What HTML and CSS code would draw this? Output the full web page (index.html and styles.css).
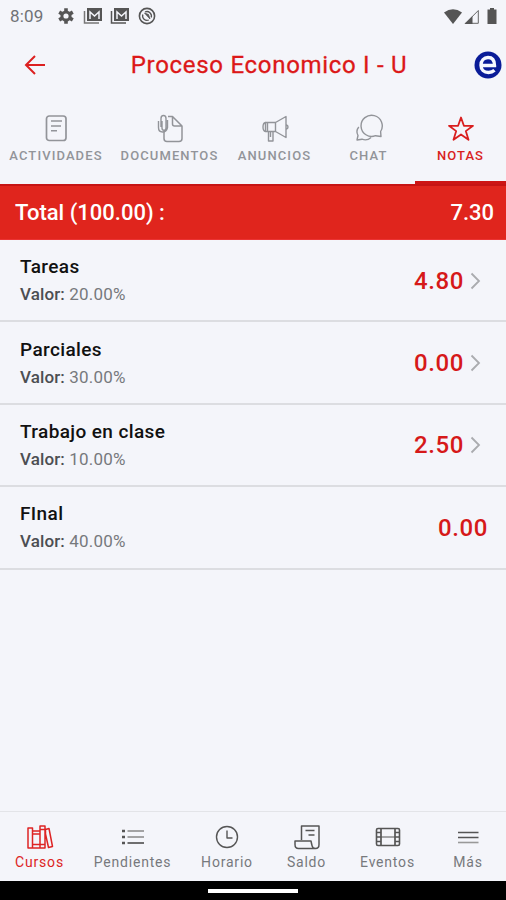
FILE: index.html
```html
<!DOCTYPE html>
<html lang="es">
<head>
<meta charset="utf-8">
<title>Proceso Economico I - U</title>
<link rel="stylesheet" href="styles.css">
</head>
<body>
<div class="app">
  <div class="status">
    <span class="time">8:09</span>
    <div class="notifications">
      <svg width="18" height="18" viewBox="0 0 18 18"><g stroke="#555" stroke-width="3.6"><path d="M9 1.200v15.600M2.200 5.100l13.600 7.800M15.800 5.100l-13.600 7.800"/></g><circle cx="9" cy="9" r="4.100" fill="#f4f5fa" stroke="#555" stroke-width="3"/></svg>
      <svg width="20" height="18" viewBox="0 0 20 18" fill="none"><path d="M1.500 4v12H16" stroke="#777" stroke-width="1.500"/><path d="M4 1h15v13H4z" fill="#555"/><path d="M7 12V5l4.500 4L16 5v7" stroke="#f4f5fa" stroke-width="1.500"/></svg>
      <svg width="20" height="18" viewBox="0 0 20 18" fill="none"><path d="M1.500 4v12H16" stroke="#555" stroke-width="1.500"/><path d="M4 1h15v13H4z" fill="#555"/><path d="M7 12V5l4.500 4L16 5v7" stroke="#f4f5fa" stroke-width="1.500"/></svg>
      <svg width="18" height="18" viewBox="0 0 18 18" fill="none" stroke="#555"><circle cx="9" cy="9" r="7.600" stroke-width="1.600"/><path d="M4.800 7.500a4.500 4.500 0 0 0 6 5.500M7 5a4.500 4.500 0 0 1 6.200 5.500" stroke-width="1.300"/><path d="M6.500 6l5.500 6-1.500-4.500z" fill="#555" stroke-width=".8"/></svg>
    </div>
    <div class="signals">
      <svg width="18" height="15" viewBox="0 0 18 15"><path d="M0 3.500Q9-3 18 3.500L9 15z" fill="#555"/></svg>
      <svg width="15" height="15" viewBox="0 0 15 15"><path d="M1.500 14.300H14.300V1.500z" fill="none" stroke="#666"/><path d="M.5 15L8.500 7v8z" fill="#555"/></svg>
      <svg width="10" height="16" viewBox="0 0 10 16"><path d="M3 0h4v1.500h2.500V16H.5V1.500H3z" fill="#555"/></svg>
    </div>
  </div>
  <header class="header">
    <svg class="back" width="22" height="20" viewBox="0 0 22 20"><path d="M21 10H2M11 1L2 10l9 9" fill="none" stroke="#dc2020" stroke-width="2"/></svg>
    <h1>Proceso Economico I - U</h1>
    <svg class="brand" width="28" height="28" viewBox="0 0 28 28"><circle cx="14" cy="14" r="13.500" fill="#0a1c98"/><path d="M7 14.500H20.500C20.500 9 18 6.500 14 6.500S7 9.500 7 14.200 10 21.500 14.500 21.500c2.500 0 4.300-.7 6-2.200" fill="none" stroke="#f6f8ff" stroke-width="3.400"/></svg>
  </header>
  <nav class="tabs">
    <a class="tab"><svg width="30" height="30" viewBox="0 0 30 30"><rect x="5.500" y="2" width="19.500" height="24.500" rx="2.800" stroke-width="1.700"/><path d="M10 7h11M10 12h10M10 16.800h6" stroke-width="1.500"/></svg><span>ACTIVIDADES</span></a>
    <a class="tab"><svg width="30" height="30" viewBox="0 0 30 30"><path d="M9 17.500V24.500q0 3 3 3H24q3 0 3-3V12L17.500 2.500H13M17.500 3v7q0 2 2 2H27" stroke-width="1.500"/><path d="M6 13V4.500Q6 1.500 8.500 1.500T11 4.500V14q0 2.200-2 2.200T7 14V7M3.500 7v6.500q0 4.500 4 4.500t5-4.500V6" stroke-width="1.400"/></svg><span>DOCUMENTOS</span></a>
    <a class="tab"><svg width="30" height="30" viewBox="0 0 30 30"><path d="M15.500 8.500L26 2.500v21L15.500 17.500zM15.500 8.500H5.500v9H15.500M8.500 17.500v9.500H13v-9.500M5.500 8.500Q3 9 3 13t2.500 4.500M26.500 11q1.500.5 1.500 2T26.500 15M7.500 8.500v9M10.500 18v5" stroke-width="1.400"/></svg><span>ANUNCIOS</span></a>
    <a class="tab"><svg width="30" height="30" viewBox="0 0 30 30"><path d="M27 22.500l-5.500-.8A10.600 10.600 0 1 1 26.600 17.500z" stroke-width="1.400"/><path d="M4.800 13Q1.500 17 4 21.500L3 26l5-.8q5 2 9-1.700" stroke-width="1.400"/></svg><span>CHAT</span></a>
    <a class="tab active"><svg width="30" height="30" viewBox="0 0 30 30"><path d="M15 3.500l2.900 8.300h9.100l-7.200 5.300 2.700 8.700-7.500-5.300-7.500 5.300 2.700-8.700L3 11.800h9.100z" stroke-width="1.800"/></svg><span>NOTAS</span></a>
  </nav>
  <section class="total"><span>Total (100.00) :</span><span class="total-score">7.30</span></section>
  <main class="grades">
    <div class="row"><div><h2>Tareas</h2><p><b>Valor:</b> 20.00%</p></div><strong>4.80</strong><svg class="chevron" width="11" height="18" viewBox="0 0 11 18"><path d="M1.500 1.500L9 9l-7.500 7.500"/></svg></div>
    <div class="row"><div><h2>Parciales</h2><p><b>Valor:</b> 30.00%</p></div><strong>0.00</strong><svg class="chevron" width="11" height="18" viewBox="0 0 11 18"><path d="M1.500 1.500L9 9l-7.500 7.500"/></svg></div>
    <div class="row"><div><h2>Trabajo en clase</h2><p><b>Valor:</b> 10.00%</p></div><strong>2.50</strong><svg class="chevron" width="11" height="18" viewBox="0 0 11 18"><path d="M1.500 1.500L9 9l-7.500 7.500"/></svg></div>
    <div class="row last"><div><h2>FInal</h2><p><b>Valor:</b> 40.00%</p></div><strong>0.00</strong></div>
  </main>
  <nav class="bottom">
    <a class="item active"><svg width="28" height="28" viewBox="0 0 28 28"><path d="M2 5h4.500v20H2zM6.500 8H14v17H6.500zM14 3h5v22h-5zM19.500 6.500L23 5.500l3.500 18-4 1L19.500 11zM6.500 11H14M6.500 21.500H14M14 6.500h5M14 21.500h5" stroke-width="1.500"/></svg><span>Cursos</span></a>
    <a class="item"><svg width="28" height="28" viewBox="0 0 28 28"><path d="M3 8h3M3 14h3M3 20h3" stroke-width="2.600"/><path d="M8.500 8H25M8.500 14H25" stroke="#888" stroke-width="1.700"/><path d="M8.500 20H25" stroke-width="1.700"/></svg><span>Pendientes</span></a>
    <a class="item"><svg width="28" height="28" viewBox="0 0 28 28"><circle cx="14" cy="14" r="10.500" stroke-width="1.400"/><path d="M14 7.500V15h5.500" stroke-width="1.400"/></svg><span>Horario</span></a>
    <a class="item"><svg width="28" height="28" viewBox="0 0 28 28"><path d="M8.500 17V3H26v18.500q0 4-3.500 4-3 0-3.500-3-.5-2-1-4.500H2v3.500q0 4 3.500 4h17" stroke-width="1.500"/><path d="M12.500 7.500h9M15.500 12h6" stroke-width="1.300"/></svg><span>Saldo</span></a>
    <a class="item"><svg width="28" height="28" viewBox="0 0 28 28"><rect x="2.500" y="5.500" width="23" height="17" rx="1.500" stroke-width="1.600"/><path d="M7 5.500v17M21 5.500v17M2.500 9.500H7M2.500 14H7M2.500 18.500H7M21 9.500h4.500M21 14h4.500M21 18.500h4.500" stroke-width="1.700"/><path d="M7 14h14" stroke-width="1"/></svg><span>Eventos</span></a>
    <a class="item"><svg width="28" height="28" viewBox="0 0 28 28"><path d="M4 9.500h20.500M4 14.500h20.500" stroke-width="1.300"/><path d="M4 19.500h20.500" stroke="#999" stroke-width="1.600"/></svg><span>Más</span></a>
  </nav>
  <footer class="system"><i></i></footer>
</div>
</body>
</html>
```

FILE: styles.css
```css
* { box-sizing: border-box; }
body { margin: 0; background: #f4f5fa; font-family: Roboto, sans-serif; }
h1, h2, p { margin: 0; }
svg { display: block; flex: none; }
.app { width: 506px; height: 900px; display: flex; flex-direction: column; overflow: hidden; }
.status { height: 32px; display: flex; align-items: center; padding: 0 8px 0 10px; }
.time { width: 47px; font-size: 17px; color: #707276; letter-spacing: .2px; }
.notifications { display: flex; align-items: center; gap: 7.500px; }
.signals { margin-left: auto; display: flex; align-items: center; gap: 3px; }
.signals svg:first-child { margin-right: -1px; }
.signals svg:last-child { margin-left: 5px; margin-right: 1px; }
.header { height: 66px; display: flex; align-items: center; padding: 0 4px 0 24px; }
.header h1 { flex: 1; text-align: center; font-size: 24px; line-height: 30px; font-weight: 400; color: #dc1818; letter-spacing: .7px; padding-left: 18px; -webkit-text-stroke: .3px #dc1818; }
.tabs { height: 86px; display: grid; grid-template-columns: 112px 115px 95px 93px 91px; }
.tab { display: flex; flex-direction: column; align-items: center; padding-top: 16px; color: #929499; font-size: 13px; line-height: 16px; font-weight: 500; letter-spacing: 1.100px; }
.tab svg, .item svg { fill: none; stroke: currentColor; stroke-linejoin: round; }
.tab span { margin-top: 4px; }
.tab.active { color: #d91f1f; border-bottom: 3px solid #cd1515; }
.total { height: 56px; border-top: 2px solid #c61414; border-bottom: 1px solid #eb3333; background: #e0251d; color: #fff; display: flex; align-items: center; justify-content: space-between; padding: 0 12px 0 15px; font-size: 22px; font-weight: 500; }
.grades { flex: 1; }
.row { height: 82.400px; border-bottom: 2px solid #dcdde1; display: flex; align-items: center; padding: 1px 25px 0 20px; }
.row.last { padding-right: 18px; }
.row > div { flex: 1; padding-top: 1px; }
.row h2 { font-size: 19px; line-height: 26px; font-weight: 500; color: #111; letter-spacing: .380px; }
.row p { font-size: 17px; line-height: 28px; color: #77797d; letter-spacing: .200px; }
.row b { font-weight: 500; color: #4c4e52; letter-spacing: .100px; }
.row strong { color: #d61919; font-size: 24px; font-weight: 500; letter-spacing: .6px; }
.chevron { margin-left: 6px; fill: none; stroke: #aaabaf; stroke-width: 1.800px; }
.bottom { height: 70px; border-top: 1px solid #e3e4e8; display: grid; grid-template-columns: 79px 107px 82px 77px 85px 76px; }
.item { display: flex; flex-direction: column; align-items: center; padding-top: 11px; color: #555; font-size: 14px; line-height: 18px; letter-spacing: .8px; }
.item span { margin-top: 2px; color: #77797d; }
.item.active, .item.active span { color: #dd2424; }
.system { height: 19px; background: #000; display: flex; align-items: center; justify-content: center; }
.system i { width: 90px; height: 4px; background: #fff; }
```
